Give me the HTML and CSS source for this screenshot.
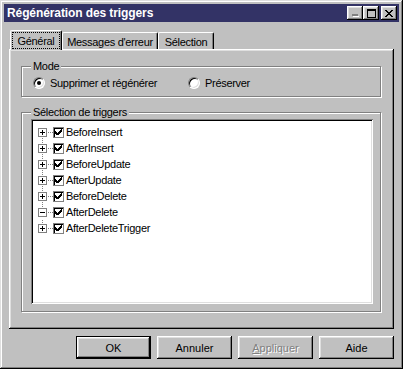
FILE: index.html
```html
<!DOCTYPE html>
<html lang="fr">
<head>
  <meta charset="UTF-8">
  <title>Régénération des triggers</title>
  <link rel="stylesheet" href="styles.css">
</head>
<body>

  <div class="window">
    <div class="titlebar">
      <span class="title">Régénération des triggers</span>
      <div class="caption-buttons">
        <span class="cap-btn">
          <svg width="8" height="7" viewBox="0 0 8 7"><rect x="2" y="6" width="6" height="1" fill="#fff"/><rect x="1" y="4" width="6" height="2" fill="#808080"/></svg>
        </span>
        <span class="cap-btn">
          <svg width="9" height="9" viewBox="0 0 9 9"><path d="M0 0h9v9H0zM1 2v6h7V2z" fill="#000" fill-rule="evenodd"/></svg>
        </span>
        <span class="cap-btn close">
          <svg width="8" height="7" viewBox="0 0 8 7"><path d="M0 0h2v1H0zM6 0h2v1H6zM1 1h2v1H1zM5 1h2v1H5zM2 2h4v1H2zM3 3h2v1H3zM2 4h4v1H2zM1 5h2v1H1zM5 5h2v1H5zM0 6h2v1H0zM6 6h2v1H6z" fill="#000"/></svg>
        </span>
      </div>
    </div>

    <div class="tabs">
      <div class="tab active"><span class="focus">Général</span></div>
      <div class="tab messages">Messages d'erreur</div>
      <div class="tab selection">Sélection</div>
    </div>

    <div class="panel">
      <fieldset class="group mode">
        <legend>Mode</legend>
        <div class="radios">
          <label class="radio-item first"><span class="radio checked"></span>Supprimer et régénérer</label>
          <label class="radio-item"><span class="radio"></span>Préserver</label>
        </div>
      </fieldset>

      <fieldset class="group triggers">
        <legend>Sélection de triggers</legend>
        <div class="tree">
          <ul class="roots">
            <li class="row"><span class="exp plus"></span><span class="hdots"></span><span class="check"><svg width="7" height="7" viewBox="0 0 7 7"><path d="M0 2l2 2 5-5v3l-4 4H2L0 5z" fill="#000"/></svg></span><span class="label">BeforeInsert</span></li>
            <li class="row"><span class="exp plus"></span><span class="hdots"></span><span class="check"><svg width="7" height="7" viewBox="0 0 7 7"><path d="M0 2l2 2 5-5v3l-4 4H2L0 5z" fill="#000"/></svg></span><span class="label">AfterInsert</span></li>
            <li class="row"><span class="exp plus"></span><span class="hdots"></span><span class="check"><svg width="7" height="7" viewBox="0 0 7 7"><path d="M0 2l2 2 5-5v3l-4 4H2L0 5z" fill="#000"/></svg></span><span class="label">BeforeUpdate</span></li>
            <li class="row"><span class="exp plus"></span><span class="hdots"></span><span class="check"><svg width="7" height="7" viewBox="0 0 7 7"><path d="M0 2l2 2 5-5v3l-4 4H2L0 5z" fill="#000"/></svg></span><span class="label">AfterUpdate</span></li>
            <li class="row"><span class="exp plus"></span><span class="hdots"></span><span class="check"><svg width="7" height="7" viewBox="0 0 7 7"><path d="M0 2l2 2 5-5v3l-4 4H2L0 5z" fill="#000"/></svg></span><span class="label">BeforeDelete</span></li>
            <li class="row"><span class="exp"></span><span class="hdots"></span><span class="check"><svg width="7" height="7" viewBox="0 0 7 7"><path d="M0 2l2 2 5-5v3l-4 4H2L0 5z" fill="#000"/></svg></span><span class="label">AfterDelete</span></li>
          </ul>
          <ul class="children">
            <li class="row"><span class="exp plus"></span><span class="hdots"></span><span class="check"><svg width="7" height="7" viewBox="0 0 7 7"><path d="M0 2l2 2 5-5v3l-4 4H2L0 5z" fill="#000"/></svg></span><span class="label">AfterDeleteTrigger</span></li>
          </ul>
        </div>
      </fieldset>
    </div>

    <div class="buttons">
      <button class="btn default">OK</button>
      <button class="btn">Annuler</button>
      <button class="btn disabled"><u>A</u>ppliquer</button>
      <button class="btn">Aide</button>
    </div>
  </div>

</body>
</html>
```

FILE: styles.css
```css
body {
  margin: 0;
  font-family: "Liberation Sans", Arial, sans-serif;
  font-size: 11px;
  letter-spacing: -0.3px;
  color: #000;
}

.window {
  width: 403px;
  height: 369px;
  box-sizing: border-box;
  padding: 4px;
  background-color: #c0c0c0;
  box-shadow: inset -1px -1px #000, inset 1px 1px #dfdfdf, inset -2px -2px #808080, inset 2px 2px #fff;
  display: flex;
  flex-direction: column;
}

/* title bar */
.titlebar {
  height: 18px;
  background-color: #333366;
  color: white;
  display: flex;
  align-items: center;
  padding: 0 2px 0 3px;
}

.title {
  flex: 1;
  font-weight: bold;
  font-size: 12px;
  letter-spacing: -0.1px;
}

.caption-buttons {
  display: flex;
}

.cap-btn {
  width: 16px;
  height: 14px;
  background-color: #c0c0c0;
  box-shadow: inset -1px -1px #000, inset 1px 1px #fff, inset -2px -2px #808080, inset 2px 2px #dfdfdf;
  display: flex;
  align-items: center;
  justify-content: center;
}

.cap-btn svg {
  display: block;
  shape-rendering: crispEdges;
}

.cap-btn.close {
  margin-left: 2px;
}

/* tabs */
.tabs {
  display: flex;
  align-items: flex-end;
  height: 19px;
  margin: 8px 0 0 6px;
  position: relative;
  z-index: 1;
}

.tab {
  height: 17px;
  box-sizing: border-box;
  border-top: 1px solid #fff;
  border-left: 1px solid #fff;
  border-right: 1px solid #000;
  border-radius: 2px 2px 0 0;
  box-shadow: inset -1px 0 #808080;
  background-color: #c0c0c0;
  display: flex;
  align-items: center;
  justify-content: center;
  padding-top: 1px;
}

.tab.active {
  width: 52px;
  height: 20px;
  margin-bottom: -1px;
  padding: 0;
  align-items: stretch;
}

.tab.messages {
  width: 96px;
}

.tab.selection {
  width: 56px;
}

.focus {
  flex: 1;
  margin: 1px;
  border: 1px dotted #000;
  display: flex;
  align-items: center;
  justify-content: center;
}

/* panel */
.panel {
  flex: 1;
  margin: 0 5px;
  padding: 11px 13px 0 12px;
  box-shadow: inset -1px -1px #000, inset 1px 1px #fff, inset -2px -2px #808080, inset 2px 2px #dfdfdf;
}

.group {
  margin: 0;
  border: 1px solid #808080;
  box-shadow: inset 1px 1px #fff, 1px 1px #fff;
  min-inline-size: 0;
}

.group legend {
  background-color: #c0c0c0;
  padding: 0 2px;
  line-height: 13px;
}

.mode {
  padding: 3px 11px 7px 11px;
}

.mode legend {
  margin-left: -2px;
}

.radios {
  display: flex;
}

.radio-item {
  display: flex;
  align-items: center;
  height: 13px;
}

.radio-item.first {
  width: 155px;
}

.radio {
  width: 12px;
  height: 12px;
  box-sizing: border-box;
  border-radius: 50%;
  border: 1px solid;
  border-color: #808080 #fff #fff #808080;
  background-color: white;
  box-shadow: inset 1px 1px #000, inset -1px -1px #dfdfdf;
  margin-right: 5px;
  display: flex;
  align-items: center;
  justify-content: center;
}

.radio.checked::after {
  content: "";
  width: 4px;
  height: 4px;
  border-radius: 50%;
  background-color: #000;
}

.triggers {
  margin-top: 9px;
  padding: 0 7px 7px 9px;
}

/* tree */
.tree {
  height: 185px;
  box-sizing: border-box;
  padding: 5px 0 0 7px;
  background-color: white;
  box-shadow: inset 1px 1px #808080, inset -1px -1px #fff, inset 2px 2px #000, inset -2px -2px #dfdfdf;
}

.tree ul {
  list-style: none;
  margin: 0;
  padding: 0;
}

.roots {
  background-image: repeating-linear-gradient(to bottom, #808080 0 1px, transparent 1px 2px);
  background-size: 1px 80px;
  background-position: 4px 8px;
  background-repeat: no-repeat;
}

.children {
  margin-left: 19px;
}

.row {
  display: flex;
  align-items: center;
  height: 16px;
}

.children .row {
  background-image: repeating-linear-gradient(to bottom, #808080 0 1px, transparent 1px 2px);
  background-size: 1px 4px;
  background-position: 4px 0;
  background-repeat: no-repeat;
}

.exp {
  width: 9px;
  height: 9px;
  box-sizing: border-box;
  border: 1px solid #808080;
  background-color: white;
  position: relative;
}

.exp::before {
  content: "";
  position: absolute;
  left: 1px;
  top: 3px;
  width: 5px;
  height: 1px;
  background-color: #000;
}

.exp.plus::after {
  content: "";
  position: absolute;
  left: 3px;
  top: 1px;
  width: 1px;
  height: 5px;
  background-color: #000;
}

.hdots {
  width: 6px;
  height: 1px;
  background-image: repeating-linear-gradient(to right, transparent 0 1px, #808080 1px 2px);
}

.check {
  width: 11px;
  height: 11px;
  box-sizing: border-box;
  border: 1px solid #808080;
  box-shadow: inset 1px 1px #000;
  background-color: white;
  padding: 1px 0 0 1px;
}

.check svg {
  display: block;
  shape-rendering: crispEdges;
}

.label {
  margin-left: 2px;
}

/* buttons */
.buttons {
  display: flex;
  justify-content: flex-end;
  gap: 6px;
  margin: 7px 5px 6px 0;
}

.btn {
  width: 75px;
  height: 23px;
  padding: 0;
  border: none;
  font: inherit;
  color: #000;
  background-color: #c0c0c0;
  box-shadow: inset -1px -1px #000, inset 1px 1px #fff, inset -2px -2px #808080, inset 2px 2px #dfdfdf;
}

.btn.default {
  box-shadow: inset 0 0 0 1px #000, inset -2px -2px #000, inset 2px 2px #fff, inset -3px -3px #808080, inset 3px 3px #dfdfdf;
}

.btn.disabled {
  color: #808080;
  text-shadow: 1px 1px #fff;
}
```
